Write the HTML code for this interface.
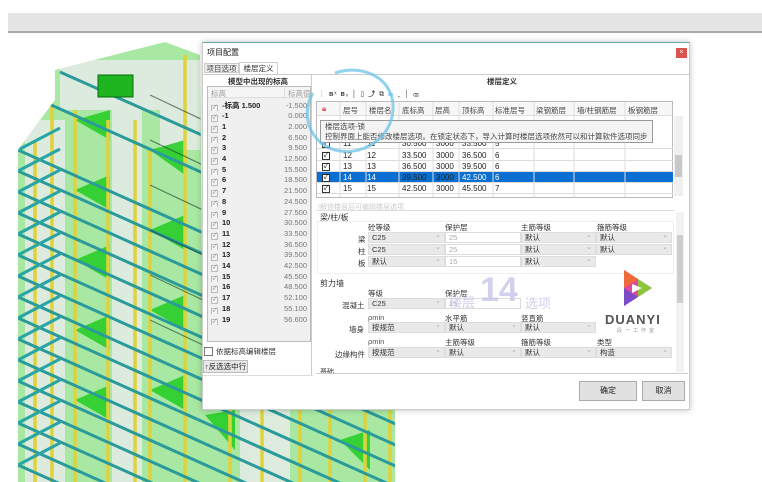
<!DOCTYPE html>
<html style="overflow:hidden;width:762px;height:482px"><head><meta charset="utf-8"><style>
*{margin:0;padding:0;box-sizing:border-box}
body{width:762px;height:482px;overflow:hidden;background:#fff;position:relative;font-family:"Liberation Sans","Noto Sans CJK SC",sans-serif;font-size:8px;color:#222}
.a{position:absolute;white-space:nowrap}
.dd{position:absolute;height:11px;background:#e9e9e9;border:1px solid #ddd;font-size:7.5px;line-height:9px;padding-left:3px;color:#333;overflow:hidden}
.dd:after{content:"⌄";position:absolute;right:3px;top:-2px;color:#aaa;font-size:7px}
.in{position:absolute;height:11px;background:#fff;border:1px solid #ddd;font-size:7.5px;line-height:9px;padding-left:3px;color:#aaa}
.lb{position:absolute;font-size:7.5px;color:#333;white-space:nowrap}
.lr{position:absolute;left:208px;width:102px;height:10.7px;font-size:7.5px;line-height:10.7px;overflow:hidden}
.lr i{display:inline-block;width:7px;height:7px;border:1px solid #bbb;background:#f3f3f3;margin:0 4px 0 3px;vertical-align:-1px;font-style:normal;font-size:6px;line-height:5px;color:#888;text-align:center}
.lr b{font-weight:bold}
.lr s{position:absolute;right:3px;text-decoration:none;color:#777}
.gr{position:absolute;left:317px;width:356px;height:11px;font-size:8px;line-height:11px;border-bottom:1px solid #ddd}
.gr span{position:absolute}
.cb{position:absolute;left:5px;top:1.5px;width:8px;height:8px;border:1px solid #333;background:#fff;font-size:7px;line-height:6px;text-align:center;color:#000}
</style></head><body>
<div class="a" style="left:8px;top:13px;width:754px;height:20px;background:#e5e5e6;border-bottom:2px solid #a9a9a9"></div>
<svg class="a" style="left:0;top:0" width="762" height="482">
<defs><clipPath id="c"><polygon points="18,150 40,120 55,100 55,70 165,42 200,55 203,410 395,410 395,482 18,482"/></clipPath></defs>
<g clip-path="url(#c)">
<rect x="0" y="0" width="420" height="482" fill="#a8e8a2"/>
<g fill="#e6ece8" opacity=".85">
<rect x="25" y="120" width="40" height="362"/><rect x="112" y="90" width="30" height="392"/><rect x="160" y="60" width="40" height="90"/><rect x="60" y="60" width="100" height="50"/><rect x="240" y="410" width="50" height="72"/>
</g>
<g fill="#22cc22" opacity=".85">
<polygon points="75,120 110,110 110,140"/><polygon points="75,190 110,175 110,210"/><polygon points="75,260 110,245 110,280"/><polygon points="75,330 110,315 110,350"/><polygon points="75,400 110,385 110,420"/><polygon points="150,150 185,140 185,175"/><polygon points="150,230 185,215 185,250"/><polygon points="150,310 185,295 185,330"/><polygon points="150,390 185,375 185,410"/><polygon points="205,415 235,410 235,450"/><polygon points="340,440 370,430 370,470"/>
</g>
<g stroke="#e0d23a" stroke-width="3.5">
<line x1="35" y1="140" x2="35" y2="482"/><line x1="52" y1="100" x2="52" y2="482"/><line x1="75" y1="110" x2="75" y2="482"/><line x1="108" y1="120" x2="108" y2="482"/><line x1="135" y1="120" x2="135" y2="482"/><line x1="150" y1="150" x2="150" y2="482"/><line x1="185" y1="55" x2="185" y2="482"/><line x1="230" y1="400" x2="230" y2="482"/><line x1="262" y1="400" x2="262" y2="482"/><line x1="300" y1="400" x2="300" y2="482"/><line x1="330" y1="400" x2="330" y2="482"/><line x1="365" y1="400" x2="365" y2="482"/><line x1="390" y1="400" x2="390" y2="482"/>
</g>
<g stroke="#2a9a9a" stroke-width="3" fill="none">
<path d="M18,150 L420,330 M18,171 L420,351 M18,192 L420,372 M18,213 L420,393 M18,234 L420,414 M18,255 L420,435 M18,276 L420,456 M18,297 L420,477 M18,318 L420,498 M18,339 L420,519 M18,360 L420,540 M18,381 L420,561 M18,402 L420,582 M18,423 L420,603 M18,444 L420,624 M18,465 L420,645 M40,100 L420,270 M60,72 L420,232"/>
<path d="M18,150 L60,128 M18,171 L60,149 M18,192 L60,170 M18,213 L60,191 M18,234 L60,212 M18,255 L60,233 M18,276 L60,254 M18,297 L60,275 M18,318 L60,296 M18,339 L60,317 M18,360 L60,338 M18,381 L60,359 M18,402 L60,380 M18,423 L60,401 M18,444 L60,422 M18,465 L60,443" stroke="#2aa5a5"/>
</g>
<g stroke="#1a3a2a" stroke-width="1.2" fill="none" opacity=".6"><path d="M150,95 L203,120 M150,140 L203,165 M150,185 L203,210 M150,230 L203,255 M150,275 L203,300 M150,320 L203,345"/></g>
<rect x="98" y="75" width="35" height="22" fill="#1fb51f" stroke="#0a6a0a"/>
</g>
</svg>
<div class="a" style="left:202px;top:42px;width:488px;height:368px;background:#fff;border:1px solid #ccc;border-top:1px solid #6aa;box-shadow:0 0 6px rgba(0,0,0,.25)"></div>
<div class="a" style="left:207px;top:47px;font-size:8px">项目配置</div>
<div class="a" style="left:676px;top:48px;width:11px;height:10px;background:#d9534f;color:#fff;font-size:7px;line-height:10px;text-align:center">×</div>
<div class="a" style="left:204px;top:63px;width:35px;height:10px;border:1px solid #ccc;background:#eee;font-size:7.5px;line-height:9px;text-align:center;color:#444">项目选项</div>
<div class="a" style="left:239px;top:62px;width:39px;height:12px;border:1px solid #ccc;border-bottom:none;background:#fff;font-size:7.5px;line-height:11px;text-align:center;color:#333">楼层定义</div>
<div class="a" style="left:203px;top:74px;width:486px;height:1px;background:#ccc"></div>
<div class="a" style="left:228px;top:76px;font-size:7.5px;font-weight:bold;color:#333">模型中出现的标高</div>
<div class="a" style="left:207px;top:86px;width:104px;height:256px;border:1px solid #bbb;background:#f0f0f0"></div>
<div class="a" style="left:208px;top:87px;width:102px;height:11px;background:#f5f5f5;border-bottom:1px solid #ddd"></div>
<div class="a" style="left:211px;top:88px;font-size:7.5px;color:#999">标高</div>
<div class="a" style="left:284px;top:88px;font-size:7.5px;color:#999;border-left:1px solid #ddd;padding-left:3px">标高值</div>
<div class="lr" style="top:100.5px"><i>✓</i><b>-标高 1.500</b><s>-1.500</s></div>
<div class="lr" style="top:111.2px"><i>✓</i><b>-1</b><s>0.000</s></div>
<div class="lr" style="top:121.9px"><i>✓</i><b>1</b><s>2.000</s></div>
<div class="lr" style="top:132.6px"><i>✓</i><b>2</b><s>6.500</s></div>
<div class="lr" style="top:143.3px"><i>✓</i><b>3</b><s>9.500</s></div>
<div class="lr" style="top:154px"><i>✓</i><b>4</b><s>12.500</s></div>
<div class="lr" style="top:164.7px"><i>✓</i><b>5</b><s>15.500</s></div>
<div class="lr" style="top:175.4px"><i>✓</i><b>6</b><s>18.500</s></div>
<div class="lr" style="top:186.1px"><i>✓</i><b>7</b><s>21.500</s></div>
<div class="lr" style="top:196.8px"><i>✓</i><b>8</b><s>24.500</s></div>
<div class="lr" style="top:207.5px"><i>✓</i><b>9</b><s>27.500</s></div>
<div class="lr" style="top:218.2px"><i>✓</i><b>10</b><s>30.500</s></div>
<div class="lr" style="top:228.9px"><i>✓</i><b>11</b><s>33.500</s></div>
<div class="lr" style="top:239.6px"><i>✓</i><b>12</b><s>36.500</s></div>
<div class="lr" style="top:250.3px"><i>✓</i><b>13</b><s>39.500</s></div>
<div class="lr" style="top:261px"><i>✓</i><b>14</b><s>42.500</s></div>
<div class="lr" style="top:271.7px"><i>✓</i><b>15</b><s>45.500</s></div>
<div class="lr" style="top:282.4px"><i>✓</i><b>16</b><s>48.500</s></div>
<div class="lr" style="top:293.1px"><i>✓</i><b>17</b><s>52.100</s></div>
<div class="lr" style="top:303.8px"><i>✓</i><b>18</b><s>55.100</s></div>
<div class="lr" style="top:314.5px"><i>✓</i><b>19</b><s>56.600</s></div>
<div class="a" style="left:204px;top:347px;width:9px;height:9px;border:1px solid #777;background:#fff"></div>
<div class="a" style="left:216px;top:346px;font-size:7.5px;color:#333">依据标高编辑楼层</div>
<div class="a" style="left:203px;top:360px;width:45px;height:13px;border:1px solid #bbb;background:#e8e8e8;font-size:7.5px;line-height:11px;text-align:center">↑反选选中行</div>
<div class="a" style="left:311px;top:75px;width:1px;height:300px;background:#ccc"></div>
<div class="a" style="left:203px;top:375px;width:110px;height:1px;background:#ddd"></div>
<div class="a" style="left:487px;top:76px;font-size:7.5px;font-weight:bold;color:#333">楼层定义</div>
<div class="a" style="left:318px;top:89px;font-size:7px;color:#444;letter-spacing:1px">┆ <b>ʙ</b>ˣ <b>ʙ</b>ₓ │ ▯ <b>⤴</b> ⧉ <span style="color:#5af">☰</span> ⌄ │ ⌫</div>
<div class="a" style="left:316px;top:101px;width:357px;height:97px;border:1px solid #bbb;background:#fff"></div>
<div class="a" style="left:317px;top:102px;width:355px;height:14px;background:#f7f7f7;border-bottom:1px solid #ddd"></div>
<div class="a" style="left:322px;top:104px;color:#e55;font-size:8px">🔒︎</div>
<div class="a" style="left:343px;top:105px;font-size:7.5px;color:#444">层号</div>
<div class="a" style="left:369px;top:105px;font-size:7.5px;color:#444">楼层名</div>
<div class="a" style="left:402px;top:105px;font-size:7.5px;color:#444">底标高</div>
<div class="a" style="left:435px;top:105px;font-size:7.5px;color:#444">层高</div>
<div class="a" style="left:462px;top:105px;font-size:7.5px;color:#444">顶标高</div>
<div class="a" style="left:495px;top:105px;font-size:7.5px;color:#444">标准层号</div>
<div class="a" style="left:536px;top:105px;font-size:7.5px;color:#444">梁钢筋层</div>
<div class="a" style="left:577px;top:105px;font-size:7.5px;color:#444">墙/柱钢筋层</div>
<div class="a" style="left:628px;top:105px;font-size:7.5px;color:#444">板钢筋层</div>
<div class="gr" style="top:138px"><div class="cb">✓</div><span style="left:26px">11</span><span style="left:50px">11</span><span style="left:85px">30.500</span><span style="left:119px">3000</span><span style="left:145px">33.500</span><span style="left:178px">5</span></div>
<div class="gr" style="top:150px"><div class="cb">✓</div><span style="left:26px">12</span><span style="left:50px">12</span><span style="left:85px">33.500</span><span style="left:119px">3000</span><span style="left:145px">36.500</span><span style="left:178px">6</span></div>
<div class="gr" style="top:161px"><div class="cb">✓</div><span style="left:26px">13</span><span style="left:50px">13</span><span style="left:85px">36.500</span><span style="left:119px">3000</span><span style="left:145px">39.500</span><span style="left:178px">6</span></div>
<div class="gr" style="top:172px;background:#0a6fd0;color:#fff"><div class="cb">✓</div><span style="left:26px">14</span><span style="left:50px">14</span><span style="left:85px;color:#222">39.500</span><span style="left:119px;color:#222">3000</span><span style="left:145px">42.500</span><span style="left:178px">6</span></div>
<div class="gr" style="top:183px"><div class="cb">✓</div><span style="left:26px">15</span><span style="left:50px">15</span><span style="left:85px">42.500</span><span style="left:119px">3000</span><span style="left:145px">45.500</span><span style="left:178px">7</span></div>
<svg class="a" style="left:316px;top:102px" width="357" height="95"><g stroke="#ddd"><line x1="24" y1="0" x2="24" y2="95"/><line x1="50" y1="0" x2="50" y2="95"/><line x1="83" y1="0" x2="83" y2="95"/><line x1="117" y1="0" x2="117" y2="95"/><line x1="143" y1="0" x2="143" y2="95"/><line x1="177" y1="0" x2="177" y2="95"/><line x1="218" y1="0" x2="218" y2="95"/><line x1="258" y1="0" x2="258" y2="95"/><line x1="309" y1="0" x2="309" y2="95"/></g></svg>
<div class="a" style="left:674px;top:116px;width:9px;height:80px;background:#f0f0f0"></div>
<div class="a" style="left:675px;top:155px;width:7px;height:22px;background:#c8c8c8"></div>
<div class="a" style="left:320px;top:120px;width:333px;height:23px;background:#f4f4f4;border:1px solid #999;font-size:7.5px;line-height:10px;padding:1px 4px;color:#444;overflow:hidden">楼层选项-锁<br>控制界面上能否修改楼层选项。在锁定状态下，导入计算时楼层选项依然可以和计算软件选项同步</div>
<div class="a" style="left:318px;top:202px;font-size:7px;color:#ccc">!解锁楼层后可编辑楼层选项</div>
<div class="a" style="left:316px;top:210px;width:359px;height:164px;border-top:1px solid #ddd"></div>
<div class="a" style="left:320px;top:212px;font-size:8px;color:#333">梁/柱/板</div>
<div class="a" style="left:317px;top:221px;width:357px;height:53px;border:1px solid #eee"></div>
<div class="lb" style="left:368px;top:222px">砼等级</div><div class="lb" style="left:445px;top:222px">保护层</div><div class="lb" style="left:521px;top:222px">主筋等级</div><div class="lb" style="left:597px;top:222px">箍筋等级</div>
<div class="lb" style="left:358px;top:234px">梁</div><div class="dd" style="left:368px;top:232px;width:77px">C25</div><div class="in" style="left:445px;top:232px;width:76px">25</div><div class="dd" style="left:521px;top:232px;width:75px">默认</div><div class="dd" style="left:596px;top:232px;width:76px">默认</div>
<div class="lb" style="left:358px;top:246px">柱</div><div class="dd" style="left:368px;top:244px;width:77px">C25</div><div class="in" style="left:445px;top:244px;width:76px">25</div><div class="dd" style="left:521px;top:244px;width:75px">默认</div><div class="dd" style="left:596px;top:244px;width:76px">默认</div>
<div class="lb" style="left:358px;top:258px">板</div><div class="dd" style="left:368px;top:256px;width:77px">默认</div><div class="in" style="left:445px;top:256px;width:76px">15</div><div class="dd" style="left:521px;top:256px;width:75px">默认</div>
<div class="a" style="left:320px;top:278px;font-size:8px;color:#333">剪力墙</div>
<div class="lb" style="left:368px;top:288px">等级</div><div class="lb" style="left:445px;top:288px">保护层</div>
<div class="lb" style="left:342px;top:300px">混凝土</div><div class="dd" style="left:368px;top:298px;width:77px">C25</div><div class="in" style="left:445px;top:298px;width:76px;color:#999">15</div>
<div class="lb" style="left:368px;top:313px;color:#555">ρmin</div><div class="lb" style="left:445px;top:313px">水平筋</div><div class="lb" style="left:521px;top:313px">竖直筋</div>
<div class="lb" style="left:349px;top:324px">墙身</div><div class="dd" style="left:368px;top:322px;width:77px">按规范</div><div class="dd" style="left:445px;top:322px;width:76px">默认</div><div class="dd" style="left:521px;top:322px;width:75px">默认</div>
<div class="lb" style="left:368px;top:337px;color:#555">ρmin</div><div class="lb" style="left:445px;top:337px">主筋等级</div><div class="lb" style="left:521px;top:337px">箍筋等级</div><div class="lb" style="left:597px;top:337px">类型</div>
<div class="lb" style="left:335px;top:349px">边缘构件</div><div class="dd" style="left:368px;top:347px;width:77px">按规范</div><div class="dd" style="left:445px;top:347px;width:76px">默认</div><div class="dd" style="left:521px;top:347px;width:75px">默认</div><div class="dd" style="left:596px;top:347px;width:76px">构造</div>
<div class="a" style="left:320px;top:367px;font-size:7px;color:#333;height:6px;overflow:hidden">基础</div>
<div class="a" style="left:316px;top:373px;width:372px;height:1px;background:#ccc"></div>
<div class="a" style="left:676px;top:212px;width:8px;height:160px;background:#f2f2f2"></div>
<div class="a" style="left:677px;top:235px;width:6px;height:68px;background:#cdcdcd"></div>
<div class="a" style="left:480px;top:270px;font-size:34px;line-height:40px;font-weight:bold;color:#c9c9ea;opacity:.85">14</div>
<div class="a" style="left:449px;top:295px;font-size:13px;line-height:16px;color:#d0d0ec">楼层</div>
<div class="a" style="left:525px;top:296px;font-size:13px;line-height:16px;color:#d0d0ec">选项</div>
<svg class="a" style="left:620px;top:268px" width="36" height="40"><polygon points="4,2 32,20 4,38" fill="#e04a9a"/><polygon points="4,2 18,11 4,20" fill="#ef6a3a"/><polygon points="18,11 32,20 18,29" fill="#8cc63f"/><polygon points="4,20 18,29 4,38" fill="#7b4bc8"/><polygon points="12,16 22,20 12,25" fill="#fff"/></svg>
<div class="a" style="left:605px;top:312px;font-size:13px;line-height:16px;font-weight:bold;color:#555;letter-spacing:1px">DUANYI</div>
<div class="a" style="left:617px;top:328px;font-size:5px;line-height:6px;color:#999;letter-spacing:3px">段一工作室</div>
<div class="a" style="left:579px;top:381px;width:58px;height:20px;border:1px solid #aaa;background:#e1e1e1;font-size:8px;line-height:18px;text-align:center">确定</div>
<div class="a" style="left:642px;top:381px;width:43px;height:20px;border:1px solid #aaa;background:#e1e1e1;font-size:8px;line-height:18px;text-align:center">取消</div>
<svg class="a" style="left:295px;top:55px" width="110" height="110"><path d="M40,18 C70,8 100,25 98,55 C96,85 65,102 40,95 C15,88 5,60 18,38" fill="none" stroke="#6cc4ea" stroke-width="3" opacity=".75"/></svg>
</body></html>
